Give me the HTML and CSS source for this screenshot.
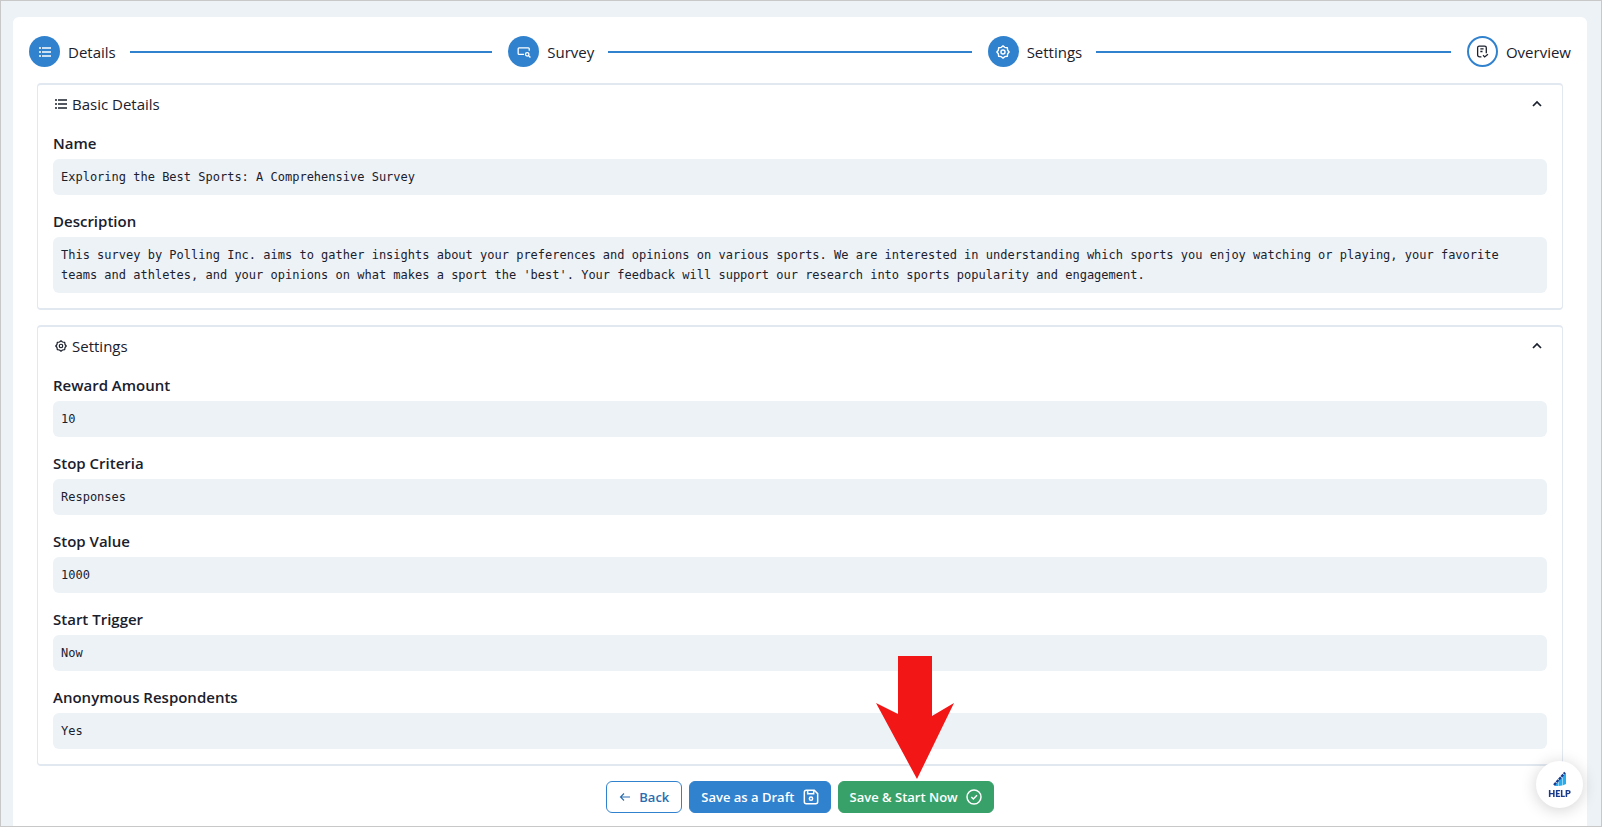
FILE: index.html
```html
<!DOCTYPE html>
<html lang="en">
<head>
<meta charset="utf-8">
<meta name="viewport" content="width=device-width, initial-scale=1">
<title>Survey Overview</title>
<link rel="stylesheet" href="styles.css">
</head>
<body>
<svg class="sprite" aria-hidden="true">
  <symbol id="i-list" viewBox="0 0 12 12"><path d="M3 2h9M3 6h9M3 10h9M0 2h2M0 6h2M0 10h2" fill="none" stroke="currentColor" stroke-width="1.300"/></symbol>
  <symbol id="i-gear" viewBox="0 0 24 24"><g fill="none" stroke="currentColor" stroke-width="2.400"><path stroke-linejoin="round" d="M12 1.500 15 4l4.400.600.600 4.400 2.500 3-2.500 3-.600 4.400-4.400.600-3 2.500-3-2.500-4.400-.600L4 15l-2.500-3L4 9l.600-4.400L9 4z"/><circle cx="12" cy="12" r="3.500"/></g></symbol>
  <symbol id="i-up" viewBox="0 0 24 24"><path d="M4 16l8-8 8 8" fill="none" stroke="currentColor" stroke-width="3.500"/></symbol>
</svg>
<div class="frame">
  <main class="card">
    <ol class="stepper">
      <li class="step">
        <span class="dot"><svg class="icon"><use href="#i-list"/></svg></span>
        <span>Details</span><span class="line"></span>
      </li>
      <li class="step">
        <span class="dot"><svg class="icon icon-md" viewBox="0 0 24 24" fill="none" stroke="currentColor" stroke-width="2.200"><path d="M12 16H3.500A1.500 1.500 0 0 1 2 14.500v-8A1.500 1.500 0 0 1 3.500 5h16A1.500 1.500 0 0 1 21 6.500V10"/><circle cx="17.500" cy="16" r="3"/><path d="M20 18.500l3 3"/></svg></span>
        <span>Survey</span><span class="line"></span>
      </li>
      <li class="step">
        <span class="dot"><svg class="icon icon-md"><use href="#i-gear"/></svg></span>
        <span>Settings</span><span class="line"></span>
      </li>
      <li class="step step-current" aria-current="step">
        <span class="dot"><svg class="icon icon-sm" viewBox="0 0 24 24" fill="none" stroke="currentColor" stroke-width="2.400"><path d="M10 22H7q-4 0-4-4V5q0-3 3-3h10q3 0 3 3v10M8 7h6M8 12h4M13 19l3 3 6-5"/></svg></span>
        <span>Overview</span>
      </li>
    </ol>

    <section class="panel">
      <button class="panel-head" type="button" aria-expanded="true">
        <svg class="icon"><use href="#i-list"/></svg><span>Basic Details</span>
        <svg class="icon chevron"><use href="#i-up"/></svg>
      </button>
      <dl class="fields">
        <div class="field"><dt>Name</dt><dd>Exploring the Best Sports: A Comprehensive Survey</dd></div>
        <div class="field"><dt>Description</dt><dd>This survey by Polling Inc. aims to gather insights about your preferences and opinions on various sports. We are interested in understanding which sports you enjoy watching or playing, your favorite<br>teams and athletes, and your opinions on what makes a sport the 'best'. Your feedback will support our research into sports popularity and engagement.</dd></div>
      </dl>
    </section>

    <section class="panel">
      <button class="panel-head" type="button" aria-expanded="true">
        <svg class="icon"><use href="#i-gear"/></svg><span>Settings</span>
        <svg class="icon chevron"><use href="#i-up"/></svg>
      </button>
      <dl class="fields">
        <div class="field"><dt>Reward Amount</dt><dd>10</dd></div>
        <div class="field"><dt>Stop Criteria</dt><dd>Responses</dd></div>
        <div class="field"><dt>Stop Value</dt><dd>1000</dd></div>
        <div class="field"><dt>Start Trigger</dt><dd>Now</dd></div>
        <div class="field"><dt>Anonymous Respondents</dt><dd>Yes</dd></div>
      </dl>
    </section>

    <div class="actions">
      <button class="btn btn-outline" type="button">
        <svg class="icon" viewBox="0 0 24 24" fill="none" stroke="currentColor" stroke-width="2.200"><path d="M22 12H3M10 5l-7 7 7 7"/></svg>Back
      </button>
      <button class="btn btn-blue" type="button">Save as a Draft
        <svg class="icon icon-lg" viewBox="0 0 24 24" fill="none" stroke="currentColor" stroke-width="2.200"><path d="M5 2h12l5 5v12q0 3-3 3H5q-3 0-3-3V5q0-3 3-3zM7 2v5h9V2"/><circle cx="12" cy="14.500" r="2.500"/></svg>
      </button>
      <div class="primary">
        <svg class="arrow" viewBox="0 0 78 123" aria-hidden="true"><path fill="#f21616" d="M22 0h34v60l22-13-37 76L0 47l22 11z"/></svg>
        <button class="btn btn-green" type="button">Save &amp; Start Now
          <svg class="icon icon-lg" viewBox="0 0 24 24" fill="none" stroke="currentColor" stroke-width="2.200"><circle cx="12" cy="12" r="10.500"/><path d="M8 12l3 3 5.500-5.500"/></svg>
        </button>
      </div>
    </div>
  </main>
</div>
<button class="help" type="button">
  <svg class="help-logo" viewBox="0 0 14 16" aria-hidden="true"><path fill="#27aef0" d="M9.500 5 13 2V13l-3.500 1.500zM5.500 9 9 6.500v8l-3.500.500zM1.500 13.500 5 11.500V15H2z"/><path fill="none" stroke="#173a8c" stroke-width="2.200" stroke-dasharray="3 .7" d="M1 14 12 1.500"/></svg>
  <span>HELP</span>
</button>
</body>
</html>
```
FILE: styles.css
```css
* { box-sizing: border-box; }
body {
  margin: 0;
  font: 15px/24px "Open Sans", "Noto Sans", sans-serif;
  color: #1a202c;
}
button { font: inherit; color: inherit; cursor: pointer; }
.sprite { position: absolute; width: 0; height: 0; }
.frame {
  display: flex;
  min-height: 100vh;
  padding: 16px 14px 0 12px;
  border: 1px solid #c8c8c8;
  background: #edf2f7;
}
.card {
  flex: 1;
  min-width: 0;
  padding: 19px 16px 12px;
  border-radius: 6px 6px 0 0;
  background: #fff;
}
.icon { width: 12px; height: 12px; flex: none; }
.icon-sm { width: 13px; height: 13px; }
.icon-md { width: 14px; height: 14px; }
.icon-lg { width: 16px; height: 16px; }

.stepper {
  display: flex;
  gap: 16px;
  margin: 0 0 16px;
  padding: 0;
  list-style: none;
}
.step { display: flex; flex: 1; align-items: center; gap: 8px; }
.step-current { flex: none; font-weight: 500; }
.dot {
  display: grid;
  place-items: center;
  width: 31px;
  height: 31px;
  border-radius: 50%;
  background: #3182ce;
  color: #fff;
}
.step-current .dot { border: 2px solid #3182ce; background: #fff; color: #1a202c; }
.line { flex: 1; height: 2px; margin-left: 6px; background: #3182ce; }

.panel {
  margin: 0 8px 15px;
  padding: 0 15px 15px;
  border: 1px solid #e2e8f0;
  border-top-width: 2px;
  border-bottom-width: 2px;
  border-radius: 4px;
}
.panel-head {
  display: flex;
  align-items: center;
  gap: 5px;
  width: 100%;
  height: 38px;
  padding: 0 2px;
  border: 0;
  background: none;
}
.chevron { margin-left: auto; margin-right: 2px; }
.fields { display: grid; gap: 15px; margin: 8px 0 0; }
.field { display: grid; gap: 4px; }
.field + .field { margin-top: -1px; }
dt { font-weight: 600; }
dd {
  margin: 0;
  padding: 8px;
  border-radius: 6px;
  background: #edf2f7;
  font: 12px/20px "DejaVu Sans Mono", monospace;
}

.actions { display: flex; justify-content: center; gap: 7px; }
.btn {
  display: flex;
  align-items: center;
  gap: 8px;
  height: 32px;
  padding: 0 11px;
  border: 1px solid #3182ce;
  border-radius: 6px;
  font-size: 13px;
  font-weight: 600;
  white-space: nowrap;
}
.btn-outline { padding: 0 12px; background: #fff; color: #2b6cb0; }
.btn-blue { background: #3182ce; color: #fff; }
.btn-green { border-color: #38a169; background: #38a169; color: #fff; }
.primary { position: relative; }
.arrow { position: absolute; left: 50%; bottom: calc(100% + 2px); width: 78px; height: 123px; margin-left: -40px; }

.help {
  position: fixed;
  right: 19px;
  bottom: 19px;
  display: flex;
  flex-direction: column;
  align-items: center;
  justify-content: center;
  gap: 2px;
  width: 47px;
  height: 47px;
  padding: 0;
  border: 0;
  border-radius: 50%;
  background: #fff;
  box-shadow: 0 2px 16px rgba(0, 0, 0, 0.18);
  font: 800 9px/9px Lato, sans-serif;
  color: #173a8c;
}
.help-logo { width: 14px; height: 16px; }
```
